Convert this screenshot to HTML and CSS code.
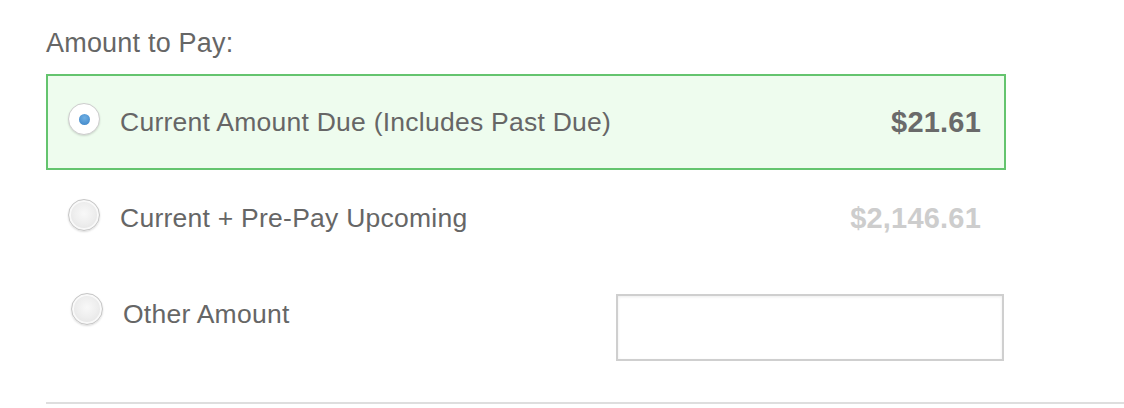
FILE: index.html
```html
<!DOCTYPE html>
<html lang="en">
<head>
<meta charset="utf-8">
<title>Amount to Pay</title>
<link rel="stylesheet" href="styles.css">
</head>
<body>
<section class="pay">
  <div class="pay__title">Amount to Pay:</div>
  <div class="options">
    <label class="option option--selected">
      <span class="radio radio--checked"></span>
      <span class="option__text">Current Amount Due (Includes Past Due)</span>
      <span class="option__amount">$21.61</span>
    </label>
    <label class="option">
      <span class="radio"></span>
      <span class="option__text">Current + Pre-Pay Upcoming</span>
      <span class="option__amount option__amount--muted">$2,146.61</span>
    </label>
    <label class="option option--other">
      <span class="radio"></span>
      <span class="option__text">Other Amount</span>
      <input class="option__input" type="text">
    </label>
  </div>
  <div class="divider"></div>
</section>
</body>
</html>
```
FILE: styles.css
```css
* { box-sizing: border-box; }
html, body { margin: 0; background: #fff; }
body {
  font-family: "Liberation Sans", Arial, sans-serif;
  color: #666;
}
.pay {
  padding: 26px 0 0 46px;
}
.pay__title {
  font-size: 27px;
  line-height: 34px;
  height: 48px;
  letter-spacing: 0.2px;
}
.options {
  width: 960px;
  display: flex;
  flex-direction: column;
}
.option {
  display: flex;
  align-items: center;
  height: 96px;
  border: 2px solid transparent;
  padding: 0 23px 0 20px;
  gap: 20px;
}
.option--selected {
  background: #eefcee;
  border-color: #64c46e;
}
.radio {
  flex: none;
  width: 32px;
  height: 32px;
  border-radius: 50%;
  border: 1px solid #c6c6c6;
  background: radial-gradient(circle at 50% 45%, #f8f8f8 0, #eeeeee 45%, #dedede 100%);
  box-shadow: 0 1px 2px rgba(0,0,0,0.14), inset 0 0 0 2px rgba(255,255,255,0.7);
  display: flex;
  align-items: center;
  justify-content: center;
  margin-top: -6px;
}
.radio--checked {
  background: #fff;
  border-color: #cdcdcd;
}
.radio--checked::after {
  content: "";
  width: 11px;
  height: 11px;
  border-radius: 50%;
  background: radial-gradient(circle at 50% 35%, #6fb0e4 0, #4a90cf 70%, #3d7fbd 100%);
}
.option__text {
  flex: 1;
  font-size: 26.5px;
  line-height: 30px;
  letter-spacing: 0.25px;
}
.option__amount {
  font-size: 29px;
  font-weight: bold;
  color: #6a6a6a;
  letter-spacing: 0.2px;
}
.option__amount--muted {
  color: #cdcdcd;
}
.option--other {
  padding-left: 23px;
  padding-right: 0;
}
.option--other .radio {
  margin-top: -10px;
}
.option__input {
  align-self: flex-end;
  width: 388px;
  height: 67px;
  margin-bottom: -1px;
  border: 2px solid #cfcfcf;
  background: #fff;
  box-shadow: inset 0 1px 3px rgba(0,0,0,0.08);
  font: inherit;
  padding: 0 10px;
  outline: none;
}
.divider {
  margin-top: 40px;
  height: 2px;
  background: #dedede;
}
```
